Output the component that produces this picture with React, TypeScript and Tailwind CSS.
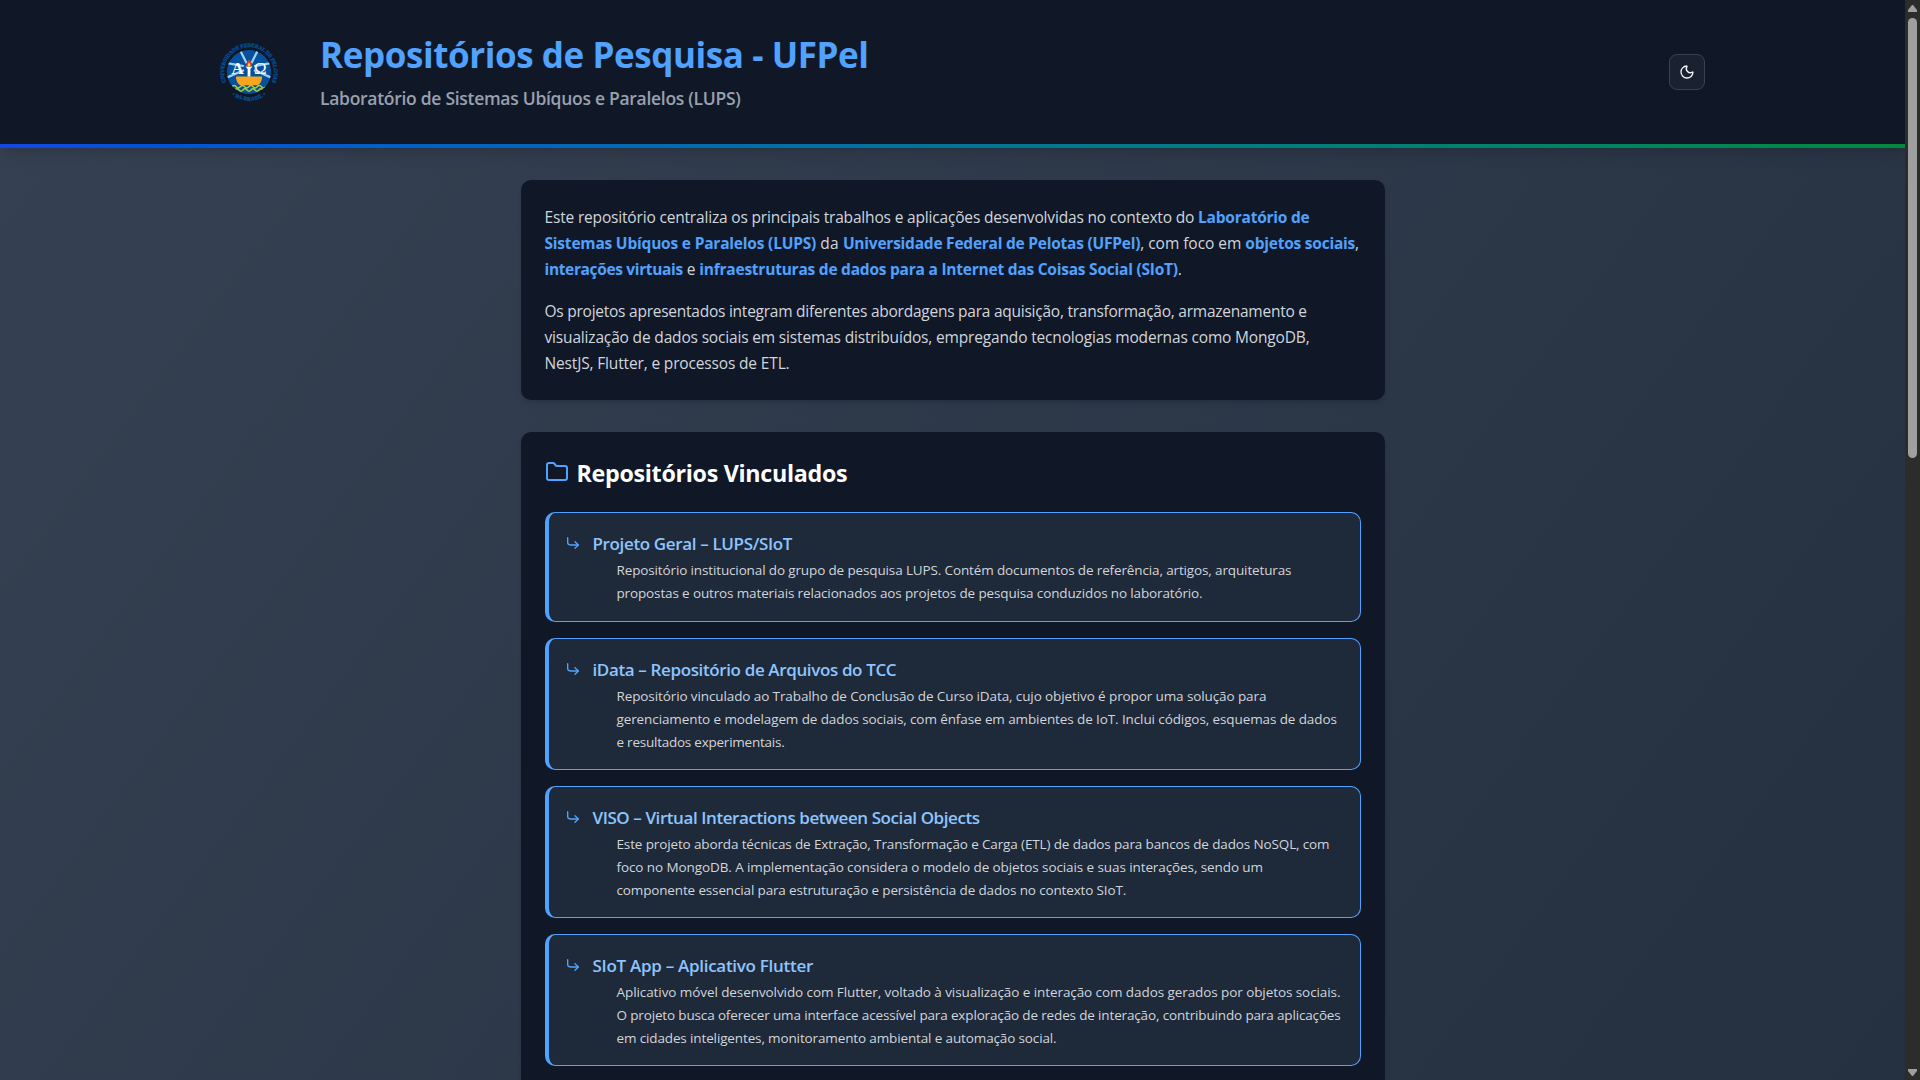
import type { ReactNode } from "react";
import { CornerDownRight, Folder, Moon } from "lucide-react";

type Line = { text: string; track: string };
type Repo = { title: Line; height: string; lines: Line[] };

const repos: Repo[] = [
  {
    title: { text: "Projeto Geral – LUPS/SIoT", track: "tracking-[-0.357px]" },
    height: "h-[110px]",
    lines: [
      { text: "Repositório institucional do grupo de pesquisa LUPS. Contém documentos de referência, artigos, arquiteturas", track: "tracking-[-0.133px]" },
      { text: "propostas e outros materiais relacionados aos projetos de pesquisa conduzidos no laboratório.", track: "tracking-[-0.136px]" },
    ],
  },
  {
    title: { text: "iData – Repositório de Arquivos do TCC", track: "tracking-[-0.37px]" },
    height: "h-[132px]",
    lines: [
      { text: "Repositório vinculado ao Trabalho de Conclusão de Curso iData, cujo objetivo é propor uma solução para", track: "tracking-[-0.105px]" },
      { text: "gerenciamento e modelagem de dados sociais, com ênfase em ambientes de IoT. Inclui códigos, esquemas de dados", track: "tracking-[-0.103px]" },
      { text: "e resultados experimentais.", track: "tracking-[-0.24px]" },
    ],
  },
  {
    title: { text: "VISO – Virtual Interactions between Social Objects", track: "tracking-[-0.42px]" },
    height: "h-[132px]",
    lines: [
      { text: "Este projeto aborda técnicas de Extração, Transformação e Carga (ETL) de dados para bancos de dados NoSQL, com", track: "tracking-[-0.132px]" },
      { text: "foco no MongoDB. A implementação considera o modelo de objetos sociais e suas interações, sendo um", track: "tracking-[-0.094px]" },
      { text: "componente essencial para estruturação e persistência de dados no contexto SIoT.", track: "tracking-[-0.147px]" },
    ],
  },
  {
    title: { text: "SIoT App – Aplicativo Flutter", track: "tracking-[-0.287px]" },
    height: "h-[132px]",
    lines: [
      { text: "Aplicativo móvel desenvolvido com Flutter, voltado à visualização e interação com dados gerados por objetos sociais.", track: "tracking-[-0.08px]" },
      { text: "O projeto busca oferecer uma interface acessível para exploração de redes de interação, contribuindo para aplicações", track: "tracking-[-0.15px]" },
      { text: "em cidades inteligentes, monitoramento ambiental e automação social.", track: "tracking-[-0.132px]" },
    ],
  },
];

function Strong({ track, children }: { track: string; children: ReactNode }) {
  return <strong className={`font-bold text-blue-400 ${track}`}>{children}</strong>;
}

function Crest() {
  return (
    <svg className="size-[64px]" viewBox="-32 -32 64 64">
      <defs>
        <path id="ring-top" d="M-22.3 11.4A25 25 0 1 1 22.3 11.4" />
        <path id="ring-bottom" d="M-23.5 16.2A28.5 28.5 0 0 0 23.5 16.2" />
        <clipPath id="disc">
          <circle r="22" />
        </clipPath>
      </defs>
      <circle r="22" fill="#07509b" />
      <g clipPath="url(#disc)">
        <path
          d="M0-4L-10-24M0-4L10-24M0-5L-23-9M0-5L23-9M0-4L-23 6M0-4L23 6"
          stroke="#9bd3f3"
          strokeWidth="2.2"
        />
        <circle cy="-4" r="5.5" fill="#07509b" />
        <path d="M-13 4.5H13C13 9 11 12.5 8.5 13.3H-8.5C-11 12.5-13 9-13 4.5Z" fill="#f9a51d" />
        <path
          d="M-17 14.8q2.1-2.4 4.2 0t4.2 0 4.2 0 4.2 0 4.2 0 4.2 0 4.2 0 4.2 0M-14 18q2-2.4 4 0t4 0 4 0 4 0 4 0 4 0 4 0"
          fill="none"
          stroke="#a6cf3a"
          strokeWidth="1.5"
        />
      </g>
      <path d="M-3.5-5.5H3.5L1.4-3V4.5H-1.4V-3Z" fill="#fff" />
      <path d="M0-12.5C3-9 3.4-7 1.8-5.5H-1.8C-3.4-7-2.6-9 0-12.5Z" fill="#e8332a" />
      <path d="M0-9.5C1.8-7.6 1.6-6.4 1-5.5H-1C-1.8-6.4-1.2-7.8 0-9.5Z" fill="#fbd22a" />
      <g fill="#fff" textAnchor="middle" className="font-['Liberation_Serif',serif] text-[17px] font-bold">
        <text x="-11.4" y="1.8">A</text>
        <text x="11.2" y="1.8" className="font-normal">Ω</text>
      </g>
      <g
        fill="#07509b"
        stroke="#07509b"
        strokeWidth="0.25"
        textAnchor="middle"
        className="font-['Liberation_Serif',serif] text-[5.4px] font-bold"
      >
        <text className="tracking-[-0.15px]">
          <textPath href="#ring-top" startOffset="50%">UNIVERSIDADE FEDERAL DE PELOTAS</textPath>
        </text>
        <text className="tracking-[0.1px]">
          <textPath href="#ring-bottom" startOffset="50%">•  RS-BRASIL  •</textPath>
        </text>
      </g>
    </svg>
  );
}

function Header() {
  return (
    <header className="relative shadow-lg">
      <div className="flex h-[144px] items-center justify-between bg-gray-900 px-[200px]">
        <div className="flex items-center gap-5">
          <div className="flex w-[100px] justify-center pr-0.5">
            <Crest />
          </div>
          <div className="whitespace-nowrap">
            <h1 className="mt-[-1px] text-[35px] leading-[45px] font-bold tracking-[-0.42px] text-blue-400">
              Repositórios de Pesquisa - UFPel
            </h1>
            <p className="mt-[7px] text-[17.5px] leading-7 font-semibold tracking-[-0.29px] text-gray-400">
              Laboratório de Sistemas Ubíquos e Paralelos (LUPS)
            </p>
          </div>
        </div>
        <button className="flex size-9 items-center justify-center rounded-lg border border-[#394150] bg-[#1a2231] text-gray-100">
          <Moon size={16} />
        </button>
      </div>
      <div className="h-1 bg-linear-to-r from-blue-700 to-[#048a3a]" />
    </header>
  );
}

function Intro() {
  return (
    <section className="rounded-[10px] bg-gray-900 p-6 text-[15.5px] leading-[26px] whitespace-nowrap text-gray-300 shadow-md">
      <p>
        <span className="tracking-[-0.173px]">
          Este repositório centraliza os principais trabalhos e aplicações desenvolvidas no contexto do{" "}
        </span>
        <Strong track="tracking-[-0.22px]">Laboratório de</Strong>
        <br />
        <Strong track="tracking-[-0.2px]">Sistemas Ubíquos e Paralelos (LUPS)</Strong>
        <span className="tracking-[0.15px]"> da </span>
        <Strong track="tracking-[-0.232px]">Universidade Federal de Pelotas (UFPel)</Strong>
        <span className="tracking-[-0.04px]">, com foco em </span>
        <Strong track="tracking-[-0.22px]">objetos sociais</Strong>,
        <br />
        <Strong track="tracking-[-0.35px]">interações virtuais</Strong>
        <span className="tracking-[-0.1px]"> e </span>
        <Strong track="tracking-[-0.229px]">
          infraestruturas de dados para a Internet das Coisas Social (SIoT)
        </Strong>
        .
      </p>
      <p className="mt-4">
        <span className="block tracking-[-0.246px]">
          Os projetos apresentados integram diferentes abordagens para aquisição, transformação, armazenamento e
        </span>
        <span className="block tracking-[-0.166px]">
          visualização de dados sociais em sistemas distribuídos, empregando tecnologias modernas como MongoDB,
        </span>
        <span className="block tracking-[-0.155px]">NestJS, Flutter, e processos de ETL.</span>
      </p>
    </section>
  );
}

function RepoCard({ repo }: { repo: Repo }) {
  return (
    <li className={`rounded-[10px] border border-l-4 border-blue-400 bg-gray-800 px-4 py-4 whitespace-nowrap ${repo.height}`}>
      <div className="flex h-7 items-center gap-3">
        <CornerDownRight size={16} className="text-blue-400" />
        <a className={`pt-0.5 text-[17px] leading-7 font-semibold text-blue-300 ${repo.title.track}`}>
          {repo.title.text}
        </a>
      </div>
      <p className="mt-0.5 pl-[52px] text-[13.5px] leading-[22.75px] text-gray-300">
        {repo.lines.map((line) => (
          <span key={line.text} className={`block ${line.track}`}>
            {line.text}
          </span>
        ))}
      </p>
    </li>
  );
}

function Scrollbar() {
  return (
    <div className="flex h-full w-[15px] flex-col items-center bg-[#2c2c2c]">
      <svg className="mt-[4px] h-[9px] w-[9px]" viewBox="0 0 9 9" fill="#9f9f9f">
        <path d="M4 1H5L9 6V8H0V6Z" />
      </svg>
      <div className="mt-[5px] h-[440px] w-[9px] rounded-full bg-[#9f9f9f]" />
      <svg className="mt-auto mb-[3px] h-[9px] w-[9px]" viewBox="0 0 9 9" fill="#9f9f9f">
        <path d="M0 1H9V3L5 8H4L0 3Z" />
      </svg>
    </div>
  );
}

export default function App() {
  return (
    <div className="flex h-[1080px] w-[1920px] overflow-hidden font-['Open_Sans','Noto_Sans',sans-serif]">
      <div className="h-full w-[1905px] overflow-hidden">
        <div className="h-[2550px] bg-linear-to-br from-gray-700 to-gray-800">
          <Header />
          <main className="mx-auto flex w-[864px] flex-col gap-8 pt-8">
            <Intro />
            <section className="h-[1200px] rounded-[10px] bg-gray-900 p-6 shadow-md">
              <h2 className="flex h-8 items-center gap-2 text-[23.25px] leading-8 font-bold tracking-[-0.29px] text-white">
                <Folder size={24} className="text-blue-400" />
                <span className="pt-px">Repositórios Vinculados</span>
              </h2>
              <ul className="mt-6 flex flex-col gap-4">
                {repos.map((repo) => (
                  <RepoCard key={repo.title.text} repo={repo} />
                ))}
              </ul>
            </section>
          </main>
        </div>
      </div>
      <Scrollbar />
    </div>
  );
}
